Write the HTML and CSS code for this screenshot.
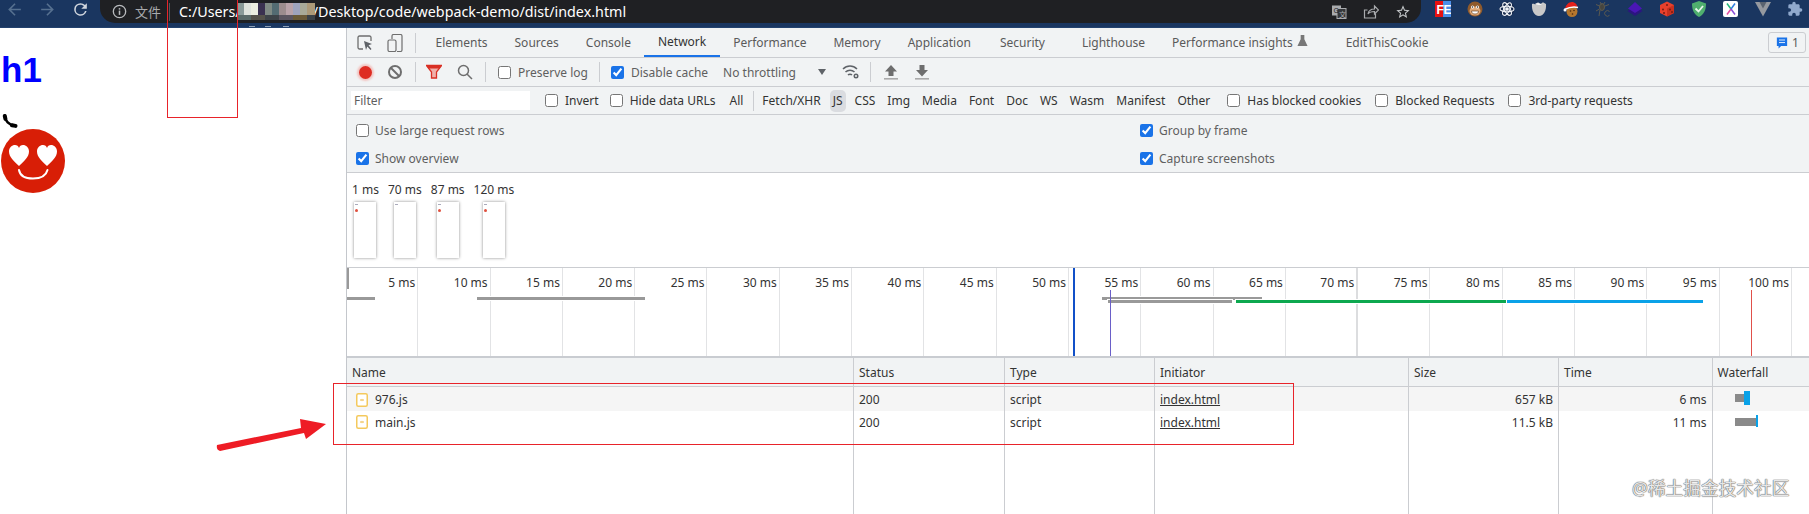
FILE: index.html
```html
<!DOCTYPE html>
<html lang="zh">
<head>
	<meta charset="UTF-8" />
	<title>webpack-demo network</title>
	<link rel="stylesheet" href="styles.css">
</head>
<body>
	<div class="topbar">
		<div class="nav">
			<svg class="nav-icon dim" viewBox="0 0 24 24"><path d="M20 11H7.83l5.59-5.59L12 4l-8 8 8 8 1.41-1.41L7.83 13H20z"/></svg>
			<svg class="nav-icon dim" viewBox="0 0 24 24"><path d="M4 11h12.17l-5.59-5.59L12 4l8 8-8 8-1.41-1.41L16.17 13H4z"/></svg>
			<svg class="nav-icon" viewBox="0 0 24 24"><path d="M17.65 6.35A7.95 7.95 0 0 0 12 4a8 8 0 1 0 7.73 10h-2.08A6 6 0 1 1 12 6c1.66 0 3.14.69 4.22 1.78L13 11h7V4z"/></svg>
		</div>
		<div class="omnibox">
			<svg class="info" viewBox="0 0 16 16"><circle cx="8" cy="8" r="6.6" fill="none" stroke="#b9bbbe" stroke-width="1.4"/><rect x="7.2" y="7" width="1.6" height="4.6" fill="#b9bbbe"/><rect x="7.2" y="4.4" width="1.6" height="1.6" fill="#b9bbbe"/></svg>
			<span class="scheme">文件</span>
			<span class="url">C:/Users/<span class="mosaic"></span>/Desktop/code/webpack-demo/dist/index.html</span>
			<div class="omni-icons">
				<svg class="omni-icon" viewBox="0 0 16 16"><rect x="1" y="1.500" width="9" height="10" fill="#a9abae"/><rect x="6" y="4.500" width="9" height="10" fill="#35373a" stroke="#a9abae"/><text x="2.500" y="9" class="svg-small" fill="#222">G</text><text x="8" y="12.500" class="svg-small" fill="#a9abae">文</text></svg>
				<svg class="omni-icon" viewBox="0 0 16 16" fill="none" stroke="#a9abae" stroke-width="1.200"><path d="M12.500 9.500v4.500h-11v-8h3"/><path d="M5 10c.5-3 3-5 6.500-5V2L15.500 6l-4 4V7.500C9 7.500 6.500 8 5 10z"/></svg>
				<svg class="omni-icon star" viewBox="0 0 24 24"><path d="M22 9.24l-7.19-.62L12 2 9.19 8.63 2 9.24l5.46 4.73L5.82 21 12 17.27 18.18 21l-1.630-7.030L22 9.240zM12 15.400l-3.760 2.270 1-4.280-3.320-2.880 4.380-.380L12 6.100l1.710 4.040 4.380.380-3.320 2.880 1 4.280L12 15.400z"/></svg>
			</div>
		</div>
		<div class="extensions">
			<svg viewBox="0 0 16 16"><rect width="8" height="16" fill="#e8100f"/><rect x="8" width="8" height="16" fill="#4a8fe8"/><text x="1.500" y="12.500" class="svg-bold" fill="#fff">F</text><text x="8.500" y="12.500" class="svg-bold" fill="#fff">E</text></svg>
			<svg viewBox="0 0 16 16"><circle cx="8" cy="8" r="7.500" fill="#8f5a2c"/><ellipse cx="8" cy="10" rx="5.500" ry="4.500" fill="#e0a877"/><circle cx="5.500" cy="6" r="1.500" fill="#fff"/><circle cx="10.500" cy="6" r="1.500" fill="#fff"/><circle cx="5.500" cy="6" r=".7" fill="#222"/><circle cx="10.500" cy="6" r=".7" fill="#222"/><path d="M4.500 10h7c0 2-1.500 3-3.500 3s-3.500-1-3.500-3z" fill="#fff" stroke="#5b3413" stroke-width=".6"/></svg>
			<svg viewBox="0 0 16 16" fill="none" stroke="#f0f3f7" stroke-width="1.100"><circle cx="8" cy="8" r="7.500" fill="#172a4c" stroke="none"/><ellipse cx="8" cy="8" rx="7" ry="2.800"/><ellipse cx="8" cy="8" rx="7" ry="2.800" transform="rotate(60 8 8)"/><ellipse cx="8" cy="8" rx="7" ry="2.800" transform="rotate(120 8 8)"/><circle cx="8" cy="8" r="1.300" fill="#f0f3f7"/></svg>
			<svg viewBox="0 0 16 16"><path d="M1 3c2-1 3 1 4 0s2-2 3-1 2 1 3 0 2 0 4 1c.5 6-2 12-7 12S.500 9 1 3z" fill="#c8c8c8"/><path d="M4 3c1-1 5-1 7 1-2 0-5 0-7-1z" fill="#f4f4f4"/></svg>
			<svg viewBox="0 0 16 16"><circle cx="9" cy="10.500" r="5.500" fill="#b5772e"/><circle cx="7.500" cy="10" r=".8" fill="#4a2a10"/><circle cx="11" cy="9.500" r=".8" fill="#4a2a10"/><circle cx="9.500" cy="13" r=".8" fill="#4a2a10"/><path d="M2 8C3 3 7 0 11 1.500c2 .8 3 2.500 3.500 4.500-3-.5-8 0-12.500 2z" fill="#e3211c"/><path d="M1.500 8.500c4-2 9-3 13.500-2" stroke="#fff" stroke-width="1.400" fill="none"/><circle cx="2" cy="9" r="1.500" fill="#fff"/></svg>
			<svg viewBox="0 0 16 16" fill="none" stroke="#5c5a50" stroke-width="1"><ellipse cx="7" cy="6" rx="2.500" ry="3.500" fill="#46453f"/><path d="M5 1l1.500 2.500M10 1L8.500 3.500M4.500 5L1 3.500M10 5l4-1.500M4.500 8L1 10M4 15l1-6"/><path d="M14.500 10.500a2.800 2.800 0 1 0 0 3.800"/></svg>
			<svg viewBox="0 0 16 16"><path d="M8 5.500l7.500 4.500L8 15 .5 10z" fill="#2c1580"/><path d="M8 1l7 6.500L8 12 1 7.500z" fill="#4a17b5"/></svg>
			<svg viewBox="0 0 16 16"><path d="M8 .5l7 3.500v8l-7 3.500-7-3.500V4z" fill="#e8402c"/><path d="M8 7.500L15 4v8l-7 3.500z" fill="#c7301f"/><circle cx="8" cy="4" r="1" fill="#7a1b10"/><circle cx="4" cy="8.500" r="1" fill="#7a1b10"/><circle cx="5" cy="12" r="1" fill="#7a1b10"/><circle cx="11" cy="8.500" r="1" fill="#7a1b10"/><circle cx="13" cy="11" r="1" fill="#7a1b10"/></svg>
			<svg viewBox="0 0 16 16"><path d="M8 0l7 2.500c0 6.500-2 11-7 13.500C3 13.500 1 9 1 2.500z" fill="#4faf6e"/><path d="M4.500 7.500L7.500 10.500 12 5" stroke="#e9f6ec" stroke-width="1.800" fill="none"/></svg>
			<svg viewBox="0 0 16 16" fill="none" stroke-width="1.500"><rect width="15" height="16" rx="2" fill="#fff"/><path d="M4 2.500L8 8" stroke="#22b57a"/><path d="M12 2.500L8 8" stroke="#2f7fe0"/><path d="M8 8l-4 5.500" stroke="#e34ca0"/><path d="M8 8l4 5.500" stroke="#8a4fd8"/></svg>
			<svg viewBox="0 0 16 16"><path d="M0 1h16L8 15.500z" fill="#95999f"/><path d="M4.500 1h7L8 7.500z" fill="#5a636f"/></svg>
			<svg viewBox="0 0 24 24" fill="#90a9cd"><path d="M20.500 11H19V7c0-1.100-.9-2-2-2h-4V3.500a2.500 2.500 0 0 0-5 0V5H4a2 2 0 0 0-2 2v3.800h1.500a2.700 2.700 0 0 1 0 5.400H2V20c0 1.100.9 2 2 2h3.800v-1.500a2.700 2.700 0 0 1 5.400 0V22H17a2 2 0 0 0 2-2v-4h1.500a2.500 2.500 0 0 0 0-5z"/></svg>
		</div>
	</div>

	<div class="main">
		<div class="page">
			<h1>h1</h1>
			<svg class="phone" viewBox="0 0 16 14" fill="none" stroke="#000"><path d="M3 2.500c0 4 4 8.500 9.500 9" stroke-width="2.600"/><path d="M2.800 2l.6 2.800M10 11.300l3.500 .6" stroke-width="4" stroke-linecap="round"/></svg>
			<svg class="face" viewBox="0 0 66 66">
				<circle cx="33" cy="33" r="32" fill="#d81e06"/>
				<path d="M19 38C14 33 9 29 9 23.500 9 19.500 12 17 15 17c2 0 3.500 1 4 3 .5-2 2-3 4-3 3 0 6 2.500 6 6.500C29 29 24 33 19 38z" fill="#fff"/>
				<path d="M47 38c-5-5-10-9-10-14.500 0-4 3-6.500 6-6.500 2 0 3.500 1 4 3 .5-2 2-3 4-3 3 0 6 2.500 6 6.500C57 29 52 33 47 38z" fill="#fff"/>
				<path d="M19 42c1 6 7 8.500 14 8.500S46 48 47.500 42" fill="none" stroke="#fff" stroke-width="2" stroke-linecap="round"/>
			</svg>
		</div>

		<div class="devtools">
			<div class="tabs">
				<svg class="dt-inspect" viewBox="0 0 16 16" fill="none" stroke="#6e6e6e" stroke-width="1.300"><path d="M6 14H2.500A1.500 1.500 0 0 1 1 12.500v-10A1.500 1.500 0 0 1 2.500 1h10A1.500 1.500 0 0 1 14 2.500V6"/><path d="M7 6l8 3-3.500 1.200L14.500 14l-1 1-3.200-3.500L9 15z" fill="#5f6368" stroke="none"/></svg>
				<svg class="dt-device" viewBox="0 0 16 18" fill="none" stroke="#6e6e6e" stroke-width="1.200"><path d="M5 5V2a1.500 1.500 0 0 1 1.500-1.500h7A1.500 1.500 0 0 1 15 2v14a1.500 1.500 0 0 1-1.500 1.500H10"/><rect x="1" y="6" width="8" height="11.500" rx="1.500"/></svg>
				<span class="sep sep-tabs"></span>
				<span class="tab">Elements</span>
				<span class="tab">Sources</span>
				<span class="tab">Console</span>
				<span class="tab active">Network</span>
				<span class="tab">Performance</span>
				<span class="tab">Memory</span>
				<span class="tab">Application</span>
				<span class="tab tab-security">Security</span>
				<span class="tab tab-far">Lighthouse</span>
				<span class="tab tab-insights">Performance insights
					<svg class="flask" viewBox="0 0 12 14"><path d="M4 1h4v4.500l3.500 7.500h-11L4 5.500z" fill="#777"/></svg></span>
				<span class="tab tab-cookie">EditThisCookie</span>
				<span class="issues">
					<svg viewBox="0 0 14 16"><path d="M1 1.500h12v10H6l-3 3v-3H1z" fill="#1a73e8"/><path d="M3.500 4.500h7M3.500 7.500h7" stroke="#fff"/></svg>
					1
				</span>
			</div>

			<div class="toolbar">
				<span class="tool"><i class="record"></i></span>
				<span class="tool"><svg viewBox="0 0 16 16" fill="none" stroke="#6e6e6e" stroke-width="2"><circle cx="8" cy="8" r="6"/><path d="M4 4l8 8"/></svg></span>
				<span class="sep sep-tool"></span>
				<span class="tool"><svg viewBox="0 0 16 14"><path d="M.5.500h15L10.500 7v6h-5V7z" fill="#f0b1ab" stroke="#d93025" stroke-width="1.300"/><path d="M.5.500h15l-2 3h-11z" fill="#d93025"/></svg></span>
				<span class="tool tool-search"><svg viewBox="0 0 16 16" fill="none" stroke="#6e6e6e" stroke-width="1.500"><circle cx="6.500" cy="6.500" r="5"/><path d="M10 10l5 5"/></svg></span>
				<span class="sep sep-tool"></span>
				<label class="check check-preserve"><input type="checkbox">Preserve log</label>
				<span class="sep sep-cache"></span>
				<label class="check check-cache"><input type="checkbox" checked>Disable cache</label>
				<span class="throttle">No throttling</span>
				<i class="caret"></i>
				<svg class="wifi" viewBox="0 0 18 16" fill="none" stroke="#5f6368" stroke-width="1.500"><path d="M1 5c4-4 10-4 14 0M3.500 8c2.500-2.500 6.500-2.500 9 0M6 11c1-1 3-1 4 0"/><circle cx="14" cy="12" r="2.500" fill="#5f6368" stroke="none"/><circle cx="14" cy="12" r="1" fill="#f1f3f4" stroke="none"/></svg>
				<span class="sep sep-wifi"></span>
				<svg class="updown" viewBox="0 0 14 16" fill="#6e6e6e"><path d="M7 1l6 6.500H9.500V12h-5V7.500H1z"/><rect y="14" width="14" height="1.600" fill="#aaa"/></svg>
				<svg class="updown" viewBox="0 0 14 16" fill="#6e6e6e"><path d="M7 12.500L1 6h3.500V1h5v5H13z"/><rect y="14" width="14" height="1.600" fill="#aaa"/></svg>
			</div>

			<div class="filterbar">
				<span class="filter-input">Filter</span>
				<label class="check check-invert"><input type="checkbox">Invert</label>
				<label class="check check-hide"><input type="checkbox">Hide data URLs</label>
				<span class="type type-all">All</span>
				<span class="sep sep-type"></span>
				<span class="type">Fetch/XHR</span>
				<span class="type selected">JS</span>
				<span class="type">CSS</span>
				<span class="type">Img</span>
				<span class="type">Media</span>
				<span class="type">Font</span>
				<span class="type">Doc</span>
				<span class="type">WS</span>
				<span class="type">Wasm</span>
				<span class="type">Manifest</span>
				<span class="type">Other</span>
				<label class="check check-cookies"><input type="checkbox">Has blocked cookies</label>
				<label class="check check-blocked"><input type="checkbox">Blocked Requests</label>
				<label class="check check-blocked"><input type="checkbox">3rd-party requests</label>
			</div>

			<div class="settings">
				<label class="check"><input type="checkbox">Use large request rows</label>
				<label class="check"><input type="checkbox" checked>Group by frame</label>
				<label class="check"><input type="checkbox" checked>Show overview</label>
				<label class="check"><input type="checkbox" checked>Capture screenshots</label>
			</div>

			<div class="filmstrip">
				<div class="shot"><span>1 ms</span><div class="frame"><i></i><b></b></div></div>
				<div class="shot"><span>70 ms</span><div class="frame"><i></i></div></div>
				<div class="shot"><span>87 ms</span><div class="frame"><i></i><b></b></div></div>
				<div class="shot"><span>120 ms</span><div class="frame"><i></i><b></b></div></div>
			</div>

			<div class="timeline">
				<div class="ticks">
					<span>5 ms</span><span>10 ms</span><span>15 ms</span><span>20 ms</span><span>25 ms</span>
					<span>30 ms</span><span>35 ms</span><span>40 ms</span><span>45 ms</span><span>50 ms</span>
					<span>55 ms</span><span>60 ms</span><span>65 ms</span><span class="tick-strong">70 ms</span><span>75 ms</span>
					<span>80 ms</span><span>85 ms</span><span>90 ms</span><span>95 ms</span><span>100 ms</span>
				</div>
				<i class="bar bar-start"></i>
				<i class="bar bar-a"></i>
				<i class="bar bar-b"></i>
				<i class="bar bar-c"></i>
				<i class="bar bar-d"></i>
				<i class="bar bar-e"></i>
				<i class="mark mark-dom"></i>
				<i class="mark mark-first"></i>
				<i class="mark mark-load"></i>
				<i class="mark mark-left"></i>
			</div>

			<div class="table">
				<div class="row head">
					<span>Name</span><span>Status</span><span>Type</span><span>Initiator</span><span>Size</span><span>Time</span><span>Waterfall</span>
				</div>
				<div class="row odd">
					<span class="file"><svg class="js" viewBox="0 0 12 14"><rect x=".75" y=".75" width="10.500" height="12.500" rx="1.500" fill="#fff" stroke="#f4c95d" stroke-width="1.500"/><path d="M4 7l1.500-1.200v2.400zM8 7L6.500 5.800v2.400z" fill="#e8a91a"/></svg>976.js</span>
					<span>200</span><span>script</span><span><u>index.html</u></span><span class="num">657 kB</span><span class="num">6 ms</span>
					<span class="wf"><i class="wf-wait wf-w1"></i><i class="wf-dl wf-d1"></i></span>
				</div>
				<div class="row">
					<span class="file"><svg class="js" viewBox="0 0 12 14"><rect x=".75" y=".75" width="10.500" height="12.500" rx="1.500" fill="#fff" stroke="#f4c95d" stroke-width="1.500"/><path d="M4 7l1.500-1.200v2.400zM8 7L6.500 5.800v2.400z" fill="#e8a91a"/></svg>main.js</span>
					<span>200</span><span>script</span><span><u>index.html</u></span><span class="num">11.5 kB</span><span class="num">11 ms</span>
					<span class="wf"><i class="wf-wait wf-w2"></i><i class="wf-dl wf-d2"></i></span>
				</div>
				<div class="row fill">
					<span></span><span></span><span></span><span></span><span></span><span></span><span></span>
				</div>
			</div>
		</div>
	</div>

	<!-- annotations drawn over the screenshot -->
	<div class="note note-url"></div>
	<div class="note note-rows"></div>
	<svg class="arrow" viewBox="0 0 112 36"><path d="M1 28L85 11 84 2 110 7 90 22 88 16 4 34Q0 33 1 28z" fill="#ee1c25"/></svg>
	<div class="watermark">@稀土掘金技术社区</div>
</body>
</html>
```

FILE: styles.css
```css
*{padding: 0;margin: 0;box-sizing: border-box;}
html,body{width: 1809px;height: 514px;overflow: hidden;background: #fff;}
body{position: relative;font: 12px "Noto Sans","Noto Sans CJK SC",sans-serif;color: #333;}
i{display: block;}

/* browser chrome */
.topbar{display: flex;height: 28px;background: #1a3660;border-bottom: 1px solid #23426e;align-items: flex-start;}
.nav{display: flex;width: 100px;padding: 0 0 0 5px;gap: 14px;}
.nav-icon{width: 19px;height: 19px;fill: #d0d6de;}
.nav-icon.dim{fill: #56708f;}
.omnibox{display: flex;align-items: center;width: 1321px;height: 23px;background: #1f2023;border-radius: 0 0 15px 15px;padding: 0 10px 0 12px;}
.info{width: 15px;height: 15px;}
.scheme{color: #a8aaad;font-size: 13px;margin-left: 8px;padding-right: 8px;border-right: 1px solid #55585c;line-height: 18px;}
.url{color: #fff;font-size: 14.300px;margin-left: 9px;display: flex;align-items: flex-start;white-space: pre;line-height: 18px;}
.mosaic{position: relative;display: block;width: 78px;height: 17px;margin: 0 -2px 0 -4px;background:
	linear-gradient(90deg,#8a9a98 0 9%,#dfe3dc 9% 18%,#eceee0 18% 27%,#3a3150 27% 36%,#7f8a84 36% 45%,#536b72 45% 54%,#9c8c8e 54% 63%,#b9a2a9 63% 72%,#9ea3bd 72% 81%,#a8aa98 81% 90%,#ac9a78 90%) top/100% 12px no-repeat,
	linear-gradient(90deg,#5a6a68 0 18%,#55524a 18% 36%,#3d4348 36% 54%,#5b5560 54% 72%,#6a5a38 72% 90%,#3a4248 90%) bottom/100% 5px no-repeat;}
.mosaic::after{content: "";position: absolute;left: 12px;top: 23px;width: 6px;height: 1px;background: #8fa0b5;box-shadow: 16px 0 #8fa0b5,34px 0 #8fa0b5;}
.omni-icons{display: flex;gap: 16px;margin-left: auto;}
.omni-icon{width: 16px;height: 16px;}
.star{fill: #c4c7c9;}
.svg-small{font: 7px "Noto Sans","Noto Sans CJK SC",sans-serif;}
.svg-bold{font: bold 12px "Liberation Sans",sans-serif;}
.extensions{display: flex;gap: 16px;margin-left: 14px;padding-top: 1px;}
.extensions svg{width: 16px;height: 16px;flex: none;}

/* inspected page */
.main{display: flex;height: 486px;}
.page{width: 346px;flex: none;}
.page h1{font: bold 35px "Liberation Sans",sans-serif;color: #00f;margin: 22px 0 25px 1px;line-height: 39px;}
.phone{display: block;width: 16px;height: 14px;margin-left: 2px;}
.face{display: block;width: 66px;height: 66px;}

/* devtools */
.devtools{flex: 1;display: flex;flex-direction: column;background: #fff;border-left: 1px solid #c4c7cc;min-width: 0;}
.sep{display: block;width: 1px;height: 20px;background: #cbcdd1;flex: none;}

.tabs{display: flex;align-items: center;height: 30px;background: #f1f3f4;border-bottom: 1px solid #cbcdd1;padding-left: 10px;color: #5a5a5a;}
.dt-inspect{width: 16px;height: 16px;}
.dt-device{width: 16px;height: 18px;margin-left: 14px;}
.sep-tabs{margin: 0 6px 0 12px;}
.tab{height: 29px;line-height: 29px;padding: 0 13.500px;white-space: nowrap;display: flex;align-items: center;}
.tab.active{color: #333;border-bottom: 2px solid #1a73e8;}
.tab-security{margin-left: 2px;}
.tab-far{margin-left: 10px;}
.tab-insights{margin-left: 0;}
.tab-cookie{margin-left: 11px;}
.flask{width: 11px;height: 13px;margin: 0 0 4px 4px;}
.issues{display: flex;align-items: center;gap: 4px;width: 38px;height: 21px;margin-left: auto;margin-right: 3px;border: 1px solid #cbcdd1;border-radius: 3px;padding-left: 7px;}
.issues svg{width: 12px;height: 14px;}

.toolbar{display: flex;align-items: center;height: 29px;background: #f1f3f4;border-bottom: 1px solid #cbcdd1;padding-left: 4px;color: #5f5f5f;}
.tool{display: flex;align-items: center;justify-content: center;width: 28px;margin-right: 2px;}
.tool svg{width: 16px;height: 16px;}
.tool-search{margin-left: 1px;}
.record{width: 13px;height: 13px;border-radius: 50%;background: #de2c22;box-shadow: 0 0 2px 2px #f2c4c1;}
.sep-tool{margin: 0 4px;}
.check{display: flex;align-items: center;gap: 7px;white-space: nowrap;}
.check input{width: 13px;height: 13px;flex: none;accent-color: #1a73e8;}
.check-preserve{margin-left: 8px;}
.sep-cache{margin-left: 11px;}
.check-cache{margin-left: 11px;}
.throttle{margin-left: 15px;}
.caret{width: 0;height: 0;border: 4px solid transparent;border-top: 6px solid #5f6368;border-bottom: 0;margin-left: 22px;}
.wifi{width: 18px;height: 16px;margin-left: 16px;}
.sep-wifi{margin-left: 10px;}
.updown{width: 14px;height: 16px;margin-left: 13px;}
.updown:last-child{margin-left: 17px;}

.filterbar{display: flex;align-items: center;height: 28px;background: #f1f3f4;border-bottom: 1px solid #cbcdd1;padding-left: 4px;}
.filter-input{width: 179px;height: 19px;line-height: 19px;background: #fff;padding-left: 3px;color: #5f5f5f;flex: none;}
.check-invert{margin-left: 15px;}
.check-hide{margin-left: 11px;}
.type{padding: 0 3px;margin-right: 6px;white-space: nowrap;height: 22px;line-height: 22px;border-radius: 5px;}
.type-all{margin-left: 11px;margin-right: 0;}
.type.selected{background: #dadce0;}
.sep-type{margin: 0 5px 0 7px;}
.check-cookies{margin-left: 8px;}
.check-blocked{margin-left: 14px;}

.settings{display: grid;grid-template-columns: 784px 1fr;padding: 1px 0 0 9px;height: 58px;background: #f1f3f4;border-bottom: 1px solid #cbcdd1;color: #5f5f5f;}
.settings .check{height: 28px;gap: 6px;}

.filmstrip{display: flex;gap: 9px;height: 94px;padding: 9px 0 0 5px;}
.shot{display: flex;flex-direction: column;align-items: center;gap: 4px;line-height: 16px;}
.frame{position: relative;width: 22px;height: 56px;background: #fff;box-shadow: 0 0 3px rgba(0,0,0,.45);}
.frame i{position: absolute;left: 1px;top: 2px;width: 3px;height: 1px;background: #aab;}
.frame b{position: absolute;left: 1px;top: 7px;width: 3px;height: 3px;border-radius: 50%;background: #e0503e;}

.timeline{position: relative;height: 91px;border-top: 1px solid #cbcdd1;border-bottom: 2px solid #c9ccd1;overflow: hidden;}
.ticks{display: flex;height: 100%;margin-left: -1px;}
.ticks span{flex: none;width: 72.300px;border-right: 1px solid #e2e3e5;text-align: right;padding: 7px 2px 0 0;line-height: 16px;white-space: nowrap;}
.ticks .tick-strong{border-right: 2px solid #dcdddf;}
.bar{position: absolute;height: 3px;outline: 1px solid #fff;}
.bar-start{left: 0;top: 29px;width: 28px;background: #999;}
.bar-a{left: 130px;top: 29px;width: 168px;background: #999;}
.bar-b{left: 755px;top: 29px;width: 160px;background: #999;}
.bar-c{left: 761px;top: 32px;width: 124px;background: #999;}
.bar-d{left: 889px;top: 32px;width: 270px;background: #0da84f;}
.bar-e{left: 1160px;top: 32px;width: 196px;background: #0aa2e8;}
.mark{position: absolute;bottom: 0;}
.mark-dom{left: 726px;top: 0;width: 2px;background: #1150c8;}
.mark-first{left: 763px;top: 22px;width: 1px;background: #6a5fc8;}
.mark-load{left: 1404px;top: 22px;width: 1px;background: #e0504a;}
.mark-left{left: 0;top: 0;height: 21px;width: 2px;background: #999;}

.table{flex: 1;display: flex;flex-direction: column;min-height: 0;}
.row{display: grid;grid-template-columns: 507px 151px 150px 254px 150px 153.500px 1fr;height: 23.500px;line-height: 23px;}
.row > span{border-right: 1px solid #cbcdd1;padding: 0 5px;white-space: nowrap;}
.row > span:last-child{border-right: 0;}
.row.head{height: 29px;line-height: 29px;background: #f1f3f4;border-bottom: 1px solid #cbcdd1;}
.row.odd{background: #f5f5f5;line-height: 25px;}
.row.fill{flex: 1;}
.file{display: flex;align-items: center;gap: 7px;padding-left: 9px !important;}
.js{width: 12px;height: 14px;}
.num{text-align: right;}
.wf{position: relative;}
.wf-wait,.wf-dl{position: absolute;}
.wf-wait{background: #8a8a8a;height: 8px;top: 7px;left: 22px;}
.wf-dl{background: #0aa2e8;}
.wf-w1{width: 9px;}
.wf-d1{left: 31px;top: 4px;width: 6px;height: 14px;}
.wf-w2{width: 21px;}
.wf-d2{left: 43px;top: 4px;width: 2px;height: 12px;}

/* red marks and watermark on top of everything */
.note{position: absolute;border: 1px solid #e8232a;}
.note-url{left: 167px;top: -2px;width: 71px;height: 120px;}
.note-rows{left: 333px;top: 383px;width: 961px;height: 62px;}
.arrow{position: absolute;left: 216px;top: 417px;width: 112px;height: 36px;}
.watermark{position: absolute;left: 1632px;top: 475px;font: 17.700px "Noto Sans","Noto Sans CJK SC",sans-serif;line-height: 26px;color: rgba(255,255,255,.85);text-shadow: 0 0 1px #666,0 0 1px #666,0 0 1px #888;white-space: nowrap;}
```
